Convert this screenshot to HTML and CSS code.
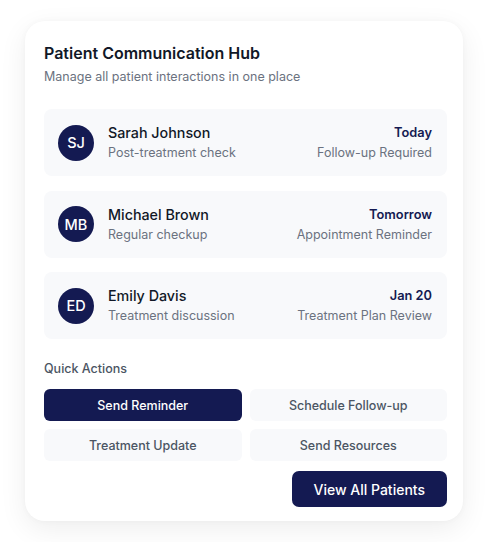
FILE: index.html
```html
<!DOCTYPE html>
<html lang="en">
<head>
<meta charset="utf-8">
<title>Patient Communication Hub</title>
<link rel="stylesheet" href="styles.css">
</head>
<body>
  <div class="card">
    <h1 class="title">Patient Communication Hub</h1>
    <p class="subtitle">Manage all patient interactions in one place</p>

    <div class="list">
      <div class="item">
        <div class="avatar">SJ</div>
        <div class="info">
          <div class="name">Sarah Johnson</div>
          <div class="sub">Post-treatment check</div>
        </div>
        <div class="meta">
          <div class="when">Today</div>
          <div class="sub">Follow-up Required</div>
        </div>
      </div>
      <div class="item">
        <div class="avatar">MB</div>
        <div class="info">
          <div class="name">Michael Brown</div>
          <div class="sub">Regular checkup</div>
        </div>
        <div class="meta">
          <div class="when">Tomorrow</div>
          <div class="sub">Appointment Reminder</div>
        </div>
      </div>
      <div class="item">
        <div class="avatar">ED</div>
        <div class="info">
          <div class="name">Emily Davis</div>
          <div class="sub">Treatment discussion</div>
        </div>
        <div class="meta">
          <div class="when">Jan 20</div>
          <div class="sub">Treatment Plan Review</div>
        </div>
      </div>
    </div>

    <div class="qa-label">Quick Actions</div>
    <div class="actions">
      <button class="btn btn-primary">Send Reminder</button>
      <button class="btn">Schedule Follow-up</button>
      <button class="btn">Treatment Update</button>
      <button class="btn">Send Resources</button>
    </div>
    <div class="footer">
      <button class="view-all">View All Patients</button>
    </div>
  </div>
</body>
</html>
```
FILE: styles.css
```css
* { box-sizing: border-box; }
html, body { margin: 0; background: #ffffff; }
body {
  font-family: Inter, "Noto Sans", sans-serif;
  padding: 21px 25px;
  color: #111827;
}
.card {
  width: 438px;
  background: #fff;
  border-radius: 20px;
  padding: 20px 16px 14px 19px;
  box-shadow: 0 8px 28px rgba(0, 0, 0, 0.07), 0 0 6px rgba(0,0,0,0.03);
}
.title {
  margin: 0;
  font-size: 16px;
  line-height: 24px;
  font-weight: 600;
  color: #111827;
}
.subtitle {
  margin: 2px 0 0;
  font-size: 12.5px;
  line-height: 20px;
  color: #6b7280;
}
.list {
  margin-top: 22px;
  display: flex;
  flex-direction: column;
  gap: 14.5px;
}
.item {
  display: flex;
  align-items: center;
  background: #f8f9fb;
  border-radius: 8px;
  padding: 14px 15px 14px 14px;
  height: 67px;
}
.avatar {
  width: 36px;
  height: 36px;
  border-radius: 50%;
  background: #141a52;
  color: #fff;
  font-size: 14.5px;
  font-weight: 500;
  display: flex;
  align-items: center;
  justify-content: center;
  flex-shrink: 0;
}
.info {
  margin-left: 14px;
  flex: 1;
  display: flex;
  flex-direction: column;
  gap: 1px;
}
.name {
  font-size: 14.3px;
  line-height: 20px;
  font-weight: 500;
  color: #111827;
}
.sub {
  font-size: 12.5px;
  line-height: 18px;
  color: #6b7280;
}
.meta {
  display: flex;
  flex-direction: column;
  align-items: flex-end;
  gap: 1px;
}
.when {
  font-size: 12.8px;
  line-height: 20px;
  font-weight: 600;
  color: #141a52;
}
.qa-label {
  margin-top: 21px;
  font-size: 12.5px;
  line-height: 18px;
  font-weight: 500;
  color: #4b5563;
}
.actions {
  margin-top: 11px;
  display: grid;
  grid-template-columns: 1fr 1fr;
  gap: 8px;
}
.btn {
  height: 32px;
  border: none;
  border-radius: 6px;
  background: #f8f9fb;
  color: #4b5563;
  font-family: inherit;
  font-size: 12.5px;
  font-weight: 500;
}
.btn-primary {
  background: #141a52;
  color: #fff;
}
.footer {
  margin-top: 10px;
  display: flex;
  justify-content: flex-end;
}
.view-all {
  height: 36px;
  padding: 0 22px;
  border: none;
  border-radius: 7px;
  background: #141a52;
  color: #fff;
  font-family: inherit;
  font-size: 14px;
  font-weight: 500;
}
```
